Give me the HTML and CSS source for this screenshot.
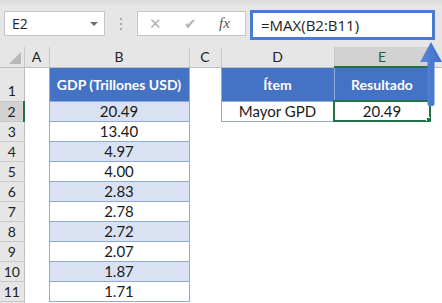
FILE: index.html
```html
<!DOCTYPE html>
<html lang="es">
<head>
  <meta charset="UTF-8">
  <title>MAX - Mayor GDP</title>
  <link rel="stylesheet" href="styles.css">
</head>
<body>
  <div class="app">
    <div class="toolbar">
      <div class="namebox">
        <span>E2</span>
        <span class="caret"></span>
      </div>
      <div class="grip"><i></i><i></i><i></i></div>
      <div class="buttons">
        <span class="btn">✕</span>
        <span class="btn">✔</span>
        <span class="fx">fx</span>
      </div>
      <div class="formula">=MAX(B2:B11)</div>
    </div>

    <table class="sheet">
      <colgroup>
        <col style="width:24px">
        <col style="width:25px">
        <col style="width:140px">
        <col style="width:32px">
        <col style="width:113px">
        <col style="width:96px">
        <col>
      </colgroup>
      <tr class="colheads">
        <th class="corner"><span class="tri"></span></th>
        <th>A</th>
        <th>B</th>
        <th>C</th>
        <th>D</th>
        <th class="selcol">E</th>
        <th class="empty"></th>
      </tr>
      <tr class="r1">
        <th class="rowhead">1</th>
        <td></td>
        <td class="thead">GDP (Trillones USD)</td>
        <td></td>
        <td class="thead">Ítem</td>
        <td class="thead">Resultado</td>
        <td></td>
      </tr>
      <tr>
        <th class="rowhead selrow">2</th>
        <td></td>
        <td class="val band">20.49</td>
        <td></td>
        <td class="val">Mayor GPD</td>
        <td class="val active">20.49<span class="handle"></span></td>
        <td></td>
      </tr>
      <tr><th class="rowhead">3</th><td></td><td class="val">13.40</td><td></td><td></td><td></td><td></td></tr>
      <tr><th class="rowhead">4</th><td></td><td class="val band">4.97</td><td></td><td></td><td></td><td></td></tr>
      <tr><th class="rowhead">5</th><td></td><td class="val">4.00</td><td></td><td></td><td></td><td></td></tr>
      <tr><th class="rowhead">6</th><td></td><td class="val band">2.83</td><td></td><td></td><td></td><td></td></tr>
      <tr><th class="rowhead">7</th><td></td><td class="val">2.78</td><td></td><td></td><td></td><td></td></tr>
      <tr><th class="rowhead">8</th><td></td><td class="val band">2.72</td><td></td><td></td><td></td><td></td></tr>
      <tr><th class="rowhead">9</th><td></td><td class="val">2.07</td><td></td><td></td><td></td><td></td></tr>
      <tr><th class="rowhead">10</th><td></td><td class="val band">1.87</td><td></td><td></td><td></td><td></td></tr>
      <tr><th class="rowhead">11</th><td></td><td class="val">1.71</td><td></td><td></td><td></td><td></td></tr>
      <tr><th class="rowhead"></th><td></td><td></td><td></td><td></td><td></td><td></td></tr>
    </table>

    <svg class="arrow" width="24" height="66" viewBox="0 0 24 66">
      <defs>
        <linearGradient id="shade" x1="0" x2="1" y1="0" y2="0">
          <stop offset="0" stop-color="#5b8ad8"/>
          <stop offset="0.5" stop-color="#4a7bd0"/>
          <stop offset="1" stop-color="#3f6fc2"/>
        </linearGradient>
      </defs>
      <path d="M12 0 L23 20 L15.5 20 L15.5 62 Q15.5 64 13.5 64 L10.5 64 Q8.5 64 8.5 62 L8.5 20 L1 20 Z" fill="url(#shade)"/>
    </svg>
  </div>
</body>
</html>
```

FILE: styles.css
```css
body {
  margin: 0;
  background: #ffffff;
  font-family: Lato, 'Noto Sans', sans-serif;
  color: #1a1a1a;
}

.app {
  position: relative;
  width: 442px;
  height: 303px;
  overflow: hidden;
}

.toolbar {
  height: 47px;
  background: linear-gradient(to bottom, #dadada 0, #e6e6e6 6px, #e6e6e6 100%);
  display: flex;
  align-items: flex-start;
  padding: 11px 0 0 4px;
  box-sizing: border-box;
  font-family: 'Open Sans', sans-serif;
}

.namebox {
  width: 101px;
  height: 25px;
  box-sizing: border-box;
  background: #fff;
  border: 1px solid #c6c6c6;
  display: flex;
  align-items: center;
  justify-content: space-between;
  padding: 0 6px 0 7px;
  font-size: 14px;
  color: #222;
}

.caret {
  width: 0;
  height: 0;
  border-left: 4px solid transparent;
  border-right: 4px solid transparent;
  border-top: 4px solid #6d6d6d;
}

.grip {
  width: 32px;
  height: 25px;
  display: flex;
  flex-direction: column;
  align-items: center;
  justify-content: center;
  gap: 3px;
}

.grip i {
  width: 2px;
  height: 2px;
  background: #a8a8a8;
}

.buttons {
  width: 109px;
  height: 25px;
  box-sizing: border-box;
  background: #fff;
  border: 1px solid #c6c6c6;
  display: flex;
  align-items: center;
  padding-left: 11px;
}

.btn {
  width: 35px;
  color: #b4b4b4;
  font-size: 15px;
  font-family: 'DejaVu Sans', sans-serif;
}

.fx {
  font-family: 'Liberation Serif', serif;
  font-style: italic;
  font-size: 15px;
  color: #555;
}

.formula {
  margin-left: 4px;
  margin-top: -1px;
  width: 185px;
  height: 30px;
  box-sizing: border-box;
  background: #fff;
  border: 3px solid #4a7bd0;
  padding-left: 8px;
  line-height: 24px;
  font-size: 15px;
  color: #222;
}

.sheet {
  border-collapse: collapse;
  table-layout: fixed;
  width: 442px;
}

.sheet th,
.sheet td {
  padding: 0;
  font-size: 15px;
  text-align: center;
  white-space: nowrap;
  overflow: hidden;
}

.colheads th {
  height: 19px;
  background: #e6e6e6;
  border-right: 1px solid #c8c8c8;
  border-bottom: 1px solid #bdbdbd;
  font-weight: normal;
  font-size: 14px;
  line-height: 18px;
  color: #222;
}

.colheads th.empty {
  border-right: none;
}

.colheads th.selcol {
  background: #d2d2d2;
  border-bottom: 2px solid #217346;
  color: #1e5e3a;
}

.corner {
  position: relative;
}

.tri {
  position: absolute;
  right: 3px;
  bottom: 3px;
  width: 0;
  height: 0;
  border-left: 12px solid transparent;
  border-bottom: 12px solid #b8b8b8;
}

.sheet .rowhead {
  background: #e6e6e6;
  border-right: 1px solid #bdbdbd;
  border-bottom: 1px solid #c8c8c8;
  font-weight: normal;
  font-size: 14px;
  color: #222;
  height: 19px;
}

.r1 .rowhead {
  height: 33px;
  vertical-align: bottom;
  line-height: 20px;
}

.rowhead.selrow {
  background: #d2d2d2;
  border-right: 2px solid #217346;
}

.sheet .thead {
  background: #4472c4;
  color: #fff;
  font-weight: bold;
  font-size: 14px;
  border: 1px solid #8ea9db;
  border-top: none;
}

.val {
  border: 1px solid #8ea9db;
  background: #fff;
}

.val.band {
  background: #d9e1f2;
}

.val.active {
  position: relative;
  outline: 2px solid #217346;
  outline-offset: -1px;
}

.handle {
  position: absolute;
  right: -3px;
  bottom: -3px;
  width: 5px;
  height: 5px;
  background: #217346;
  border: 1px solid #fff;
}

.arrow {
  position: absolute;
  left: 419px;
  top: 42px;
}
```
